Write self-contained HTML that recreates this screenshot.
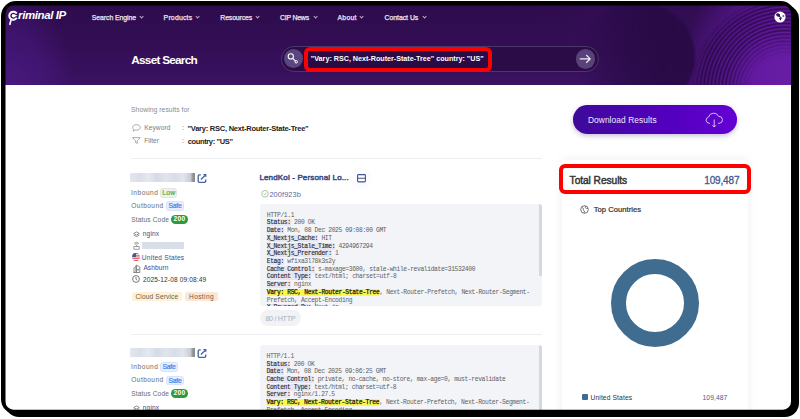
<!DOCTYPE html>
<html><head><meta charset="utf-8">
<style>
html,body{margin:0;padding:0;width:800px;height:419px;overflow:hidden;background:#fff;}
body{font-family:"Liberation Sans",sans-serif;position:relative;}
.a{position:absolute;}
.t{position:absolute;white-space:nowrap;line-height:normal;}
#content{position:absolute;left:0;top:0;width:800px;height:419px;clip-path:inset(4px 7.5px 8px 4px round 9px);background:#fff;}
#frame{position:absolute;left:0;top:0;z-index:50;}
#shadow{position:absolute;left:5px;top:5px;width:793.8px;height:412px;background:#000;border-radius:14px;}
.chev{position:absolute;width:2.2px;height:2.2px;border-right:0.7px solid #b9b0c9;border-bottom:0.7px solid #b9b0c9;transform:rotate(45deg);}
.code{position:absolute;background:#f3f4f8;border-radius:3px;overflow:hidden;}
.code pre{margin:0;font-family:"Liberation Mono",monospace;font-size:6.3px;letter-spacing:-0.365px;line-height:7.74px;color:#606060;position:absolute;left:6.5px;}
.code b{font-weight:normal;color:#2a2a2a;background:#e5e5f3;-webkit-text-stroke:0.12px #2a2a2a;}
.code i{font-style:normal;color:#1e1e1e;background:#fbf84e;-webkit-text-stroke:0.25px #1e1e1e;}
.bdg{position:absolute;box-sizing:border-box;}
</style></head><body>
<div id="shadow"></div>
<div id="content">
  <div id="banner" class="a" style="left:0;top:0;width:800px;height:84.6px;overflow:hidden;background:#3a1262;">
    <div class="a" style="left:0;top:0;width:800px;height:85px;background:linear-gradient(180deg,#2d0b4b 0%,#330e55 55%,#3a1262 100%);"></div>
    <div class="a" style="left:0;top:0;width:800px;height:85px;background:radial-gradient(ellipse 75px 110px at 0px 90px,rgba(82,30,150,0.6) 0%,rgba(82,30,150,0.35) 60%,rgba(82,30,150,0) 100%);"></div>
    <div class="a" style="left:0;top:0;width:800px;height:85px;background:radial-gradient(ellipse 110px 60px at 640px 0px,rgba(70,22,120,0.2) 0%,rgba(70,22,120,0) 100%);"></div>
    <div class="a" style="left:0;top:0;width:800px;height:85px;background:radial-gradient(ellipse 125px 135px at 805px 75px,#6a1ea6 0%,#6219a0 45%,rgba(90,24,150,0.8) 68%,rgba(70,20,120,0) 100%);"></div>
    <div class="a" style="left:580px;top:2px;width:115px;height:110px;border-radius:50%;background:linear-gradient(90deg,rgba(40,10,68,0) 0%,rgba(40,10,68,0.6) 40%,rgba(40,10,68,0.85) 65%,rgba(40,10,68,0.9) 100%);filter:blur(0.8px);"></div>
    <div class="a" style="left:0;top:0;width:800px;height:85px;background:repeating-radial-gradient(circle at 785px 90px,rgba(30,4,50,0) 0px,rgba(30,4,50,0.7) 1.8px,rgba(30,4,50,0) 3.6px);-webkit-mask-image:radial-gradient(circle at 785px 90px,transparent 33px,rgba(0,0,0,0.5) 48px,#000 60px,#000 84px,rgba(0,0,0,0.5) 90px,transparent 95px)"></div>

    <!-- logo mark -->
    <svg class="a" style="left:0;top:0" width="30" height="30" viewBox="0 0 30 30">
      <path d="M16.78 13.6A4.05 4.05 0 1 0 16.78 17.8" fill="none" stroke="#fff" stroke-width="2"/>
      <circle cx="13.4" cy="15.7" r="1.75" fill="#fff"/>
      <path d="M13.4 14.1L17.6 15.7 13.4 17.3Z" fill="#fff"/>
      <line x1="10.9" y1="20.4" x2="9.9" y2="24.3" stroke="#fff" stroke-width="1.7" stroke-linecap="round"/>
    </svg>
    <!-- nav chevrons -->
    <div class="chev" style="left:140px;top:15.3px;"></div>
    <div class="chev" style="left:195.8px;top:15.3px;"></div>
    <div class="chev" style="left:256.2px;top:15.3px;"></div>
    <div class="chev" style="left:313.5px;top:15.3px;"></div>
    <div class="chev" style="left:360.4px;top:15.3px;"></div>
    <div class="chev" style="left:422.5px;top:15.3px;"></div>
    <!-- globe -->
    <svg class="a" style="left:773.5px;top:11.4px" width="12" height="12" viewBox="0 0 12 12">
      <circle cx="6" cy="6" r="5.6" fill="#fff"/>
      <ellipse cx="4.1" cy="4" rx="2.1" ry="1.55" transform="rotate(25 4.1 4)" fill="#3a1260"/>
      <path d="M5 4.2L7.4 6.6 6.8 7.1 4.3 5.1Z" fill="#3a1260"/>
      <path d="M4.9 6.9Q6.4 6.1 8 6.6L6.5 9.7Z" fill="#3a1260"/>
      <ellipse cx="9.4" cy="5" rx="1.05" ry="0.75" fill="#3a1260"/>
    </svg>
    <!-- search bar -->
    <div class="a" style="left:280.5px;top:46px;width:318px;height:25.6px;box-sizing:border-box;border:1px solid #4b376a;border-radius:13px;background:#2b0c46;"></div>
    <div class="a" style="left:283.7px;top:48.9px;width:19.5px;height:19.5px;border-radius:50%;background:#5a4580;"></div>
    <svg class="a" style="left:283px;top:48px" width="20" height="20" viewBox="0 0 20 20">
      <circle cx="7.8" cy="8.4" r="2.6" fill="none" stroke="#fff" stroke-width="1.05"/>
      <line x1="9.7" y1="10.3" x2="12.6" y2="13.2" stroke="#fff" stroke-width="1.05"/>
      <circle cx="13.2" cy="13.8" r="1.25" fill="none" stroke="#fff" stroke-width="1"/>
    </svg>
    <div class="a" style="left:304px;top:46.7px;width:188.3px;height:24.9px;box-sizing:border-box;border:4.2px solid #fe0000;border-radius:6px;background:#2a0b45;"></div>
    <div class="a" style="left:575.7px;top:48.9px;width:19.8px;height:19.8px;border-radius:50%;background:#574279;"></div>
    <svg class="a" style="left:578px;top:51px" width="16" height="16" viewBox="0 0 16 16">
      <path d="M1.8 7.9H12.2M8.2 4L12.2 7.9 8.2 11.8" fill="none" stroke="#f2eef8" stroke-width="1.2"/>
    </svg>
  </div>

  <!-- separators -->
  <div class="a" style="left:131px;top:158px;width:411px;height:1px;background:#eceef2;"></div>
  <div class="a" style="left:131px;top:334px;width:411px;height:1px;background:#eceef2;"></div>

  <!-- results-for icons -->
  <svg class="a" style="left:131.7px;top:123.5px" width="9" height="8" viewBox="0 0 9 8"><path d="M4.5 0.7C6.7 0.7 8.3 1.9 8.3 3.4S6.7 6.1 4.5 6.1C4 6.1 3.5 6 3.1 5.9L1.2 7.2 1.6 5.4C1 4.9 0.7 4.2 0.7 3.4 0.7 1.9 2.3 0.7 4.5 0.7Z" fill="none" stroke="#8a8a8a" stroke-width="0.7"/></svg>
  <svg class="a" style="left:131.7px;top:136.8px" width="9" height="7" viewBox="0 0 9 7"><path d="M0.6 0.6H8.2L5.2 3.8V6.4L3.6 5.6V3.8Z" fill="none" stroke="#8a8a8a" stroke-width="0.7" stroke-linejoin="round"/></svg>

  <!-- card 1 shapes -->
  <div class="a" style="left:129.7px;top:172.8px;width:65.2px;height:9.6px;background:linear-gradient(90deg,#e3e7ef 0%,#d9dee8 15%,#e4e8f0 28%,#d5dbe6 42%,#e0e4ec 55%,#d8dde7 70%,#e2e5ec 82%,#c9ccd3 93%,#8d8f94 97%,#8a8c90 100%);filter:blur(0.6px);"></div>
  <svg class="a" style="left:197px;top:173px" width="10" height="10" viewBox="0 0 10 10"><path d="M3.8 1.9H2.3Q1.2 1.9 1.2 3V8.3Q1.2 9.3 2.3 9.3H7.6Q8.7 9.3 8.7 8.3V6.6" fill="none" stroke="#4764a3" stroke-width="1.35"/><path d="M5.9 1.1H9.4V4.6Z" fill="#4764a3"/><path d="M8.6 1.9L3.9 6.6" fill="none" stroke="#4764a3" stroke-width="1.35"/></svg>
  <div class="bdg" style="left:160.4px;top:187.9px;width:16.2px;height:10.5px;border-radius:2.5px;background:#eef0ec;border:0.5px solid #e3e6df;"></div>
  <div class="bdg" style="left:166.1px;top:201.3px;width:17.7px;height:9.7px;border-radius:2.5px;background:#e7effd;border:0.5px solid #d6e3fa;"></div>
  <div class="bdg" style="left:170.9px;top:214.7px;width:16.7px;height:9px;border-radius:4.5px;background:#2d9a3c;"></div>
  <svg class="a" style="left:132.6px;top:231px" width="7" height="7" viewBox="0 0 7 7"><path d="M3.5 0.9L6.3 2.5 3.5 4.1 0.7 2.5Z M0.7 4L3.5 5.7 6.3 4" fill="none" stroke="#7d7d7d" stroke-width="0.85" stroke-linejoin="round"/></svg>
  <svg class="a" style="left:132.6px;top:241px" width="7" height="9" viewBox="0 0 7 9"><path d="M1 2.5Q3.5 0 6 2.5 M2 3.3Q3.5 2 5 3.3 M3.5 4V5.5 M0.8 5.5H6.2V8.3H0.8Z" fill="none" stroke="#777" stroke-width="0.7"/></svg>
  <div class="a" style="left:142px;top:241.9px;width:41.7px;height:6.7px;background:#d9dee9;filter:blur(0.4px);"></div>
  <svg class="a" style="left:132.3px;top:252.9px" width="8" height="8" viewBox="0 0 8 8"><defs><clipPath id="fc"><circle cx="4" cy="4" r="3.9"/></clipPath></defs><g clip-path="url(#fc)"><rect width="8" height="8" fill="#fff"/><rect y="0" width="8" height="1.2" fill="#e0454b"/><rect y="2.3" width="8" height="1.2" fill="#e0454b"/><rect y="4.6" width="8" height="1.2" fill="#e0454b"/><rect y="6.9" width="8" height="1.2" fill="#e0454b"/><rect width="4" height="4" fill="#3a5aa8"/></g></svg>
  <svg class="a" style="left:132.5px;top:264px" width="8" height="9" viewBox="0 0 8 9"><path d="M1 8.5V4L3.2 2.2V8.5 M3.2 8.5V1L6.8 3V8.5H0.5 M4.6 5V6.5 M5.6 5V6.5" fill="none" stroke="#666" stroke-width="0.75"/></svg>
  <svg class="a" style="left:132.3px;top:275px" width="8" height="8" viewBox="0 0 8 8"><circle cx="4" cy="4" r="3.4" fill="none" stroke="#555" stroke-width="0.8"/><path d="M4 2V4.3L5.3 5.2" fill="none" stroke="#555" stroke-width="0.7"/></svg>
  <div class="a" style="left:131.75px;top:291.5px;width:50.6px;height:9.1px;border-radius:2px;background:#fdf2d5;"></div>
  <div class="a" style="left:184.9px;top:291.5px;width:32.8px;height:9.1px;border-radius:2px;background:#fbe7d4;"></div>

  <!-- middle 1 shapes -->
  <div class="a" style="left:350px;top:167px;width:22px;height:22px;border-radius:50%;background:#fcfcfe;"></div>
  <svg class="a" style="left:356.5px;top:174px" width="9" height="8.5" viewBox="0 0 9 8.5"><rect x="0.6" y="0.6" width="7.8" height="7.3" rx="0.8" fill="none" stroke="#40568f" stroke-width="1.1"/><line x1="0.6" y1="4.25" x2="8.4" y2="4.25" stroke="#40568f" stroke-width="1.1"/></svg>
  <svg class="a" style="left:260.7px;top:190.3px" width="8" height="7.5" viewBox="0 0 8 7.5"><circle cx="4" cy="3.75" r="3.3" fill="none" stroke="#9bb59b" stroke-width="0.8"/><path d="M2.5 3.5L3.7 4.7 5.6 2.5" fill="none" stroke="#9bb59b" stroke-width="0.7"/></svg>
  <div class="code" style="left:260.3px;top:204px;width:281.7px;height:101.8px;">
<pre style="top:7.6px;">HTTP/1.1
<b>Status:</b> 200 OK
<b>Date:</b> Mon, 08 Dec 2025 09:08:00 GMT
<b>X_Nextjs_Cache:</b> HIT
<b>X_Nextjs_Stale_Time:</b> 4294967294
<b>X_Nextjs_Prerender:</b> 1
<b>Etag:</b> wfixa3l78k3s2y
<b>Cache Control:</b> s-maxage=3600, stale-while-revalidate=31532400
<b>Content Type:</b> text/html; charset=utf-8
<b>Server:</b> nginx
<i>Vary: RSC, Next-Router-State-Tree</i>, Next-Router-Prefetch, Next-Router-Segment-
Prefetch, Accept-Encoding
<b>X_Powered_By:</b> Next.js</pre>
    <div style="position:absolute;right:0;top:0;width:3px;height:72px;background:#d6d8de;border-radius:1px;"></div>
  </div>
  <div class="a" style="left:260.1px;top:310.1px;width:40.6px;height:16.2px;border-radius:8.1px;background:#f0f2f5;"></div>

  <!-- card 2 shapes -->
  <div class="a" style="left:129.8px;top:347.7px;width:65.3px;height:9.5px;background:linear-gradient(90deg,#e3e7ef 0%,#d9dee8 15%,#e4e8f0 28%,#d5dbe6 42%,#e0e4ec 55%,#d8dde7 70%,#e2e5ec 82%,#c9ccd3 93%,#8d8f94 97%,#8a8c90 100%);filter:blur(0.6px);"></div>
  <svg class="a" style="left:197px;top:347.6px" width="10" height="10" viewBox="0 0 10 10"><path d="M3.8 1.9H2.3Q1.2 1.9 1.2 3V8.3Q1.2 9.3 2.3 9.3H7.6Q8.7 9.3 8.7 8.3V6.6" fill="none" stroke="#4764a3" stroke-width="1.35"/><path d="M5.9 1.1H9.4V4.6Z" fill="#4764a3"/><path d="M8.6 1.9L3.9 6.6" fill="none" stroke="#4764a3" stroke-width="1.35"/></svg>
  <div class="bdg" style="left:160.2px;top:362.3px;width:17.7px;height:9.5px;border-radius:2.5px;background:#e7effd;border:0.5px solid #d6e3fa;"></div>
  <div class="bdg" style="left:166.2px;top:375.7px;width:17.6px;height:9.8px;border-radius:2.5px;background:#e7effd;border:0.5px solid #d6e3fa;"></div>
  <div class="bdg" style="left:171.2px;top:389px;width:16.5px;height:8.8px;border-radius:4.4px;background:#2d9a3c;"></div>
  <svg class="a" style="left:132.6px;top:405px" width="7" height="7" viewBox="0 0 7 7"><path d="M3.5 0.9L6.3 2.5 3.5 4.1 0.7 2.5Z M0.7 4L3.5 5.7 6.3 4" fill="none" stroke="#7d7d7d" stroke-width="0.85" stroke-linejoin="round"/></svg>
  <div class="code" style="left:260px;top:345.2px;width:282px;height:80px;">
<pre style="top:7.6px;">HTTP/1.1
<b>Status:</b> 200 OK
<b>Date:</b> Mon, 08 Dec 2025 09:06:25 GMT
<b>Cache Control:</b> private, no-cache, no-store, max-age=0, must-revalidate
<b>Content Type:</b> text/html; charset=utf-8
<b>Server:</b> nginx/1.27.5
<i>Vary: RSC, Next-Router-State-Tree</i>, Next-Router-Prefetch, Next-Router-Segment-
Prefetch, Accept-Encoding</pre>
    <div style="position:absolute;right:0;top:0;width:3px;height:72px;background:#d6d8de;border-radius:1px;"></div>
  </div>

  <!-- right column -->
  <div class="a" style="left:562px;top:160px;width:185.5px;height:270px;background:#fff;box-shadow:0 0 9px rgba(110,125,160,0.13);"></div>
  <div class="a" style="left:573px;top:105.2px;width:163.8px;height:28.7px;border-radius:14.35px;background:linear-gradient(90deg,#3e0a9a 0%,#5200bd 55%,#6400d4 100%);box-shadow:0 2px 5px rgba(60,40,110,0.28);"></div>
  <svg class="a" style="left:704px;top:111px" width="20" height="18" viewBox="0 0 20 18"><path d="M6 12.3H5.2A3.2 3.2 0 0 1 4.6 6 5.3 5.3 0 0 1 14.6 5.4 3.4 3.4 0 0 1 15.4 12.3H14" fill="none" stroke="#e6dcff" stroke-width="0.85"/><path d="M10.2 8.5V16M8.4 14.2L10.2 16 12 14.2" fill="none" stroke="#e6dcff" stroke-width="0.85"/></svg>
  <div class="a" style="left:558.8px;top:164px;width:192.6px;height:29.9px;box-sizing:border-box;border:4px solid #fe0000;border-radius:6px;background:#fff;"></div>
  <svg class="a" style="left:580.4px;top:205.4px" width="9" height="9" viewBox="0 0 9 9"><circle cx="4.5" cy="4.5" r="3.8" fill="none" stroke="#555" stroke-width="0.8"/><path d="M2 2.5L3.5 3.5 3 5 4.5 6 4.2 8 M5.5 1L5.2 2.5 6.8 3.6 8 3.3" fill="none" stroke="#555" stroke-width="0.7"/></svg>
  <svg class="a" style="left:611px;top:259.4px" width="88" height="88" viewBox="0 0 88 88"><circle cx="44" cy="44" r="36.5" fill="none" stroke="#3f6c8f" stroke-width="15"/></svg>
  <div class="a" style="left:582px;top:394px;width:5.6px;height:6px;border-radius:1px;background:#3f6c8f;"></div>

<div class="t" style="left:18.10px;top:9.40px;font-size:11.5px;font-weight:bold;font-style:italic;color:#fff;letter-spacing:-0.411px;">riminal IP</div>
<div class="t" style="left:91.80px;top:14.00px;font-size:6.9px;font-weight:normal;font-style:normal;color:#ebe5f2;letter-spacing:-0.069px;-webkit-text-stroke:0.25px #ebe5f2">Search Engine</div>
<div class="t" style="left:163.60px;top:14.00px;font-size:6.9px;font-weight:normal;font-style:normal;color:#ebe5f2;letter-spacing:0.189px;-webkit-text-stroke:0.25px #ebe5f2">Products</div>
<div class="t" style="left:220.30px;top:14.00px;font-size:6.9px;font-weight:normal;font-style:normal;color:#ebe5f2;letter-spacing:-0.141px;-webkit-text-stroke:0.25px #ebe5f2">Resources</div>
<div class="t" style="left:279.95px;top:14.00px;font-size:6.9px;font-weight:normal;font-style:normal;color:#ebe5f2;letter-spacing:-0.196px;-webkit-text-stroke:0.25px #ebe5f2">CIP News</div>
<div class="t" style="left:337.50px;top:14.00px;font-size:6.9px;font-weight:normal;font-style:normal;color:#ebe5f2;letter-spacing:0.246px;-webkit-text-stroke:0.25px #ebe5f2">About</div>
<div class="t" style="left:384.45px;top:14.00px;font-size:6.9px;font-weight:normal;font-style:normal;color:#ebe5f2;letter-spacing:-0.025px;-webkit-text-stroke:0.25px #ebe5f2">Contact Us</div>
<div class="t" style="left:131.30px;top:52.80px;font-size:11.8px;font-weight:bold;font-style:normal;color:#fff;letter-spacing:-0.761px;">Asset Search</div>
<div class="t" style="left:310.85px;top:53.60px;font-size:7.2px;font-weight:bold;font-style:normal;color:#fff;letter-spacing:-0.013px;">"Vary: RSC, Next-Router-State-Tree" country: "US"</div>
<div class="t" style="left:131.00px;top:105.90px;font-size:6.8px;font-weight:normal;font-style:normal;color:#8c8c8c;letter-spacing:0.041px;">Showing results for</div>
<div class="t" style="left:144.20px;top:123.80px;font-size:6.6px;font-weight:normal;font-style:normal;color:#7b7b7b;letter-spacing:0.082px;">Keyword</div>
<div class="t" style="left:182.00px;top:123.80px;font-size:6.6px;font-weight:normal;font-style:normal;color:#444;letter-spacing:0.000px;">:</div>
<div class="t" style="left:187.50px;top:123.80px;font-size:7.5px;font-weight:bold;font-style:normal;color:#222;letter-spacing:-0.237px;">"Vary: RSC, Next-Router-State-Tree"</div>
<div class="t" style="left:144.20px;top:137.20px;font-size:6.6px;font-weight:normal;font-style:normal;color:#7b7b7b;letter-spacing:0.006px;">Filter</div>
<div class="t" style="left:182.00px;top:137.20px;font-size:6.6px;font-weight:normal;font-style:normal;color:#444;letter-spacing:0.000px;">:</div>
<div class="t" style="left:187.70px;top:136.90px;font-size:7.5px;font-weight:bold;font-style:normal;color:#222;letter-spacing:-0.363px;">country: "US"</div>
<div class="t" style="left:131.00px;top:189.10px;font-size:6.6px;font-weight:normal;font-style:normal;color:#6b6b6b;letter-spacing:0.519px;">Inbound</div>
<div class="t" style="left:131.30px;top:201.90px;font-size:6.6px;font-weight:normal;font-style:normal;color:#6b6b6b;letter-spacing:0.411px;">Outbound</div>
<div class="t" style="left:131.30px;top:215.50px;font-size:6.6px;font-weight:normal;font-style:normal;color:#6b6b6b;letter-spacing:0.125px;">Status Code</div>
<div class="t" style="left:162.30px;top:189.40px;font-size:6.9px;font-weight:normal;font-style:normal;color:#4caf50;letter-spacing:0.113px;-webkit-text-stroke:0.2px #4caf50">Low</div>
<div class="t" style="left:168.40px;top:201.90px;font-size:6.8px;font-weight:normal;font-style:normal;color:#3f80ec;letter-spacing:-0.236px;-webkit-text-stroke:0.2px #3f80ec">Safe</div>
<div class="t" style="left:173.60px;top:215.00px;font-size:6.6px;font-weight:bold;font-style:normal;color:#fff;letter-spacing:0.279px;">200</div>
<div class="t" style="left:142.80px;top:230.40px;font-size:6.6px;font-weight:normal;font-style:normal;color:#3a4f8c;letter-spacing:0.130px;">nginx</div>
<div class="t" style="left:141.80px;top:253.70px;font-size:6.6px;font-weight:normal;font-style:normal;color:#3a4f8c;letter-spacing:0.231px;">United States</div>
<div class="t" style="left:143.40px;top:264.10px;font-size:6.6px;font-weight:normal;font-style:normal;color:#3a4f8c;letter-spacing:0.065px;">Ashburn</div>
<div class="t" style="left:142.90px;top:275.90px;font-size:6.6px;font-weight:normal;font-style:normal;color:#333;letter-spacing:0.110px;">2025-12-08 09:08:49</div>
<div class="t" style="left:135.45px;top:292.50px;font-size:6.6px;font-weight:normal;font-style:normal;color:#6b5d52;letter-spacing:0.145px;">Cloud Service</div>
<div class="t" style="left:189.00px;top:292.50px;font-size:6.6px;font-weight:normal;font-style:normal;color:#6b5d52;letter-spacing:0.374px;">Hosting</div>
<div class="t" style="left:131.00px;top:363.10px;font-size:6.6px;font-weight:normal;font-style:normal;color:#6b6b6b;letter-spacing:0.519px;">Inbound</div>
<div class="t" style="left:131.30px;top:375.90px;font-size:6.6px;font-weight:normal;font-style:normal;color:#6b6b6b;letter-spacing:0.411px;">Outbound</div>
<div class="t" style="left:131.30px;top:389.50px;font-size:6.6px;font-weight:normal;font-style:normal;color:#6b6b6b;letter-spacing:0.125px;">Status Code</div>
<div class="t" style="left:162.40px;top:362.90px;font-size:6.8px;font-weight:normal;font-style:normal;color:#3f80ec;letter-spacing:-0.236px;-webkit-text-stroke:0.2px #3f80ec">Safe</div>
<div class="t" style="left:168.40px;top:376.60px;font-size:6.8px;font-weight:normal;font-style:normal;color:#3f80ec;letter-spacing:-0.236px;-webkit-text-stroke:0.2px #3f80ec">Safe</div>
<div class="t" style="left:173.60px;top:389.00px;font-size:6.6px;font-weight:bold;font-style:normal;color:#fff;letter-spacing:0.279px;">200</div>
<div class="t" style="left:142.80px;top:404.40px;font-size:6.6px;font-weight:normal;font-style:normal;color:#3a4f8c;letter-spacing:0.130px;">nginx</div>
<div class="t" style="left:259.40px;top:173.30px;font-size:8.0px;font-weight:normal;font-style:normal;color:#3b4d85;letter-spacing:0.152px;-webkit-text-stroke:0.5px #3b4d85">LendKol - Personal Lo...</div>
<div class="t" style="left:269.40px;top:189.50px;font-size:7.4px;font-weight:normal;font-style:normal;color:#5a6a9a;letter-spacing:0.093px;">200f923b</div>
<div class="t" style="left:265.40px;top:314.00px;font-size:7.2px;font-weight:normal;font-style:normal;color:#a9afba;letter-spacing:-0.332px;">80 / HTTP</div>
<div class="t" style="left:587.90px;top:114.80px;font-size:8.4px;font-weight:normal;font-style:normal;color:#efe9ff;letter-spacing:0.080px;">Download Results</div>
<div class="t" style="left:569.60px;top:174.60px;font-size:10.2px;font-weight:normal;font-style:normal;color:#333;letter-spacing:-0.058px;-webkit-text-stroke:0.45px #333">Total Results</div>
<div class="t" style="left:704.30px;top:174.60px;font-size:10.0px;font-weight:normal;font-style:normal;color:#3e5a8e;letter-spacing:-0.164px;-webkit-text-stroke:0.3px #3e5a8e">109,487</div>
<div class="t" style="left:593.70px;top:204.80px;font-size:7.6px;font-weight:normal;font-style:normal;color:#333;letter-spacing:0.051px;-webkit-text-stroke:0.22px #333">Top Countries</div>
<div class="t" style="left:590.50px;top:393.60px;font-size:6.7px;font-weight:normal;font-style:normal;color:#333;letter-spacing:0.119px;">United States</div>
<div class="t" style="left:702.50px;top:393.60px;font-size:6.7px;font-weight:normal;font-style:normal;color:#3e5a8e;letter-spacing:0.101px;">109,487</div>
</div>
<svg id="frame" width="800" height="419" viewBox="0 0 800 419"><path fill="#000" fill-rule="evenodd" d="M16 1H780.5A15 15 0 0 1 795.5 16V399.2A15 15 0 0 1 780.5 414.2H16A15 15 0 0 1 1 399.2V16A15 15 0 0 1 16 1Z M13.5 5.5H783.0A8 8 0 0 1 791.0 13.5V401.7A8 8 0 0 1 783.0 409.7H13.5A8 8 0 0 1 5.5 401.7V13.5A8 8 0 0 1 13.5 5.5Z"/></svg>
</body></html>
